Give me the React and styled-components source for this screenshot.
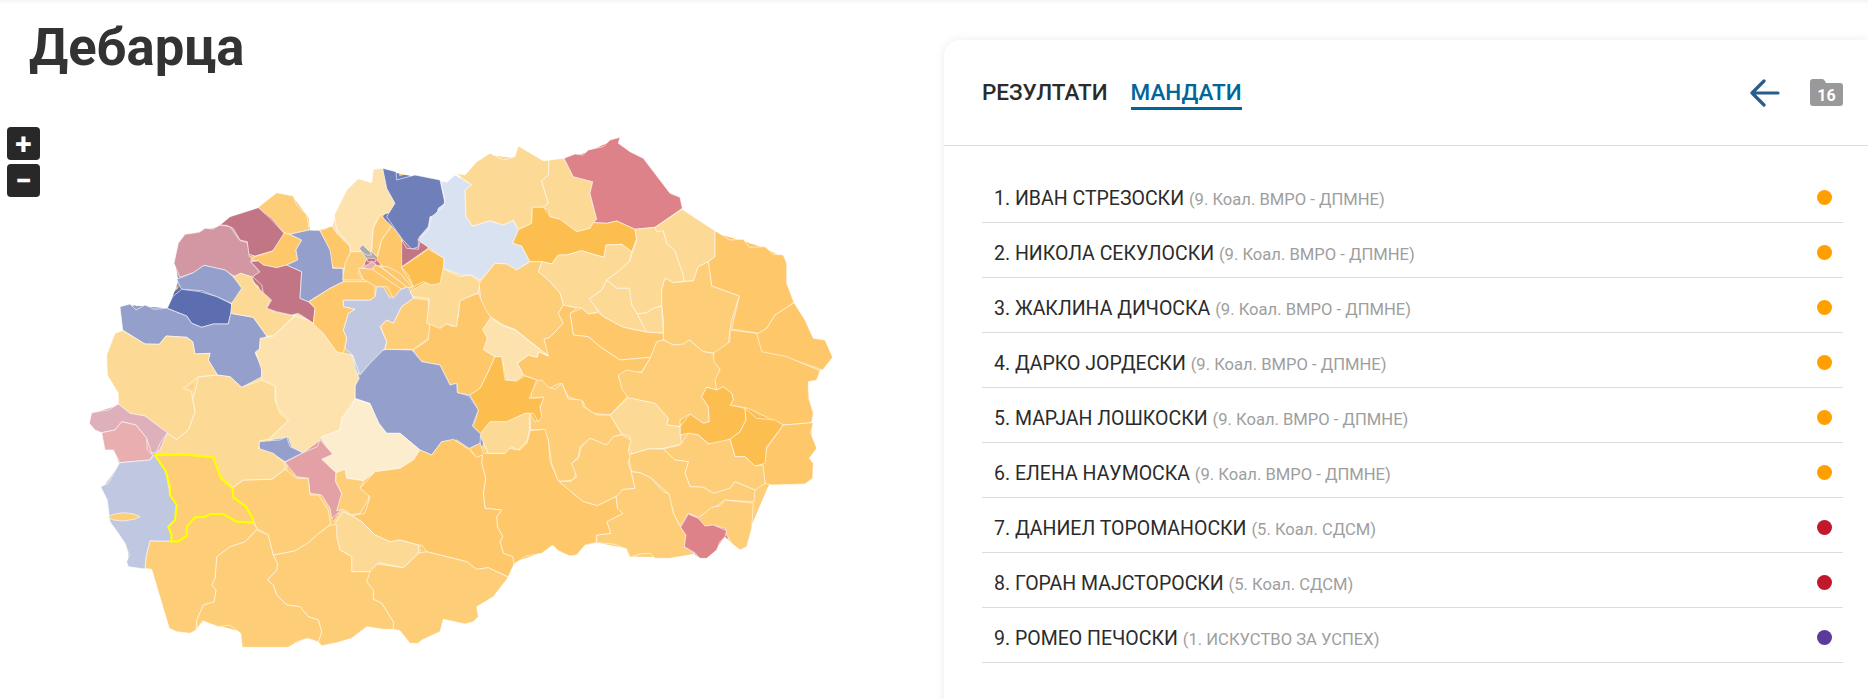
import React from 'react';
import styled, { createGlobalStyle } from 'styled-components';

const GlobalStyle = createGlobalStyle`
    html, body {
        margin: 0;
        padding: 0;
        background: #fff;
        font-family: Roboto, "Liberation Sans", sans-serif;
    }
    body {
        height: 699px;
        overflow: hidden;
    }
`;

const MANDATES = [
    { name: 'ИВАН СТРЕЗОСКИ', party: '9. Коал. ВМРО - ДПМНЕ', color: '#ffa000' },
    { name: 'НИКОЛА СЕКУЛОСКИ', party: '9. Коал. ВМРО - ДПМНЕ', color: '#ffa000' },
    { name: 'ЖАКЛИНА ДИЧОСКА', party: '9. Коал. ВМРО - ДПМНЕ', color: '#ffa000' },
    { name: 'ДАРКО ЈОРДЕСКИ', party: '9. Коал. ВМРО - ДПМНЕ', color: '#ffa000' },
    { name: 'МАРЈАН ЛОШКОСКИ', party: '9. Коал. ВМРО - ДПМНЕ', color: '#ffa000' },
    { name: 'ЕЛЕНА НАУМОСКА', party: '9. Коал. ВМРО - ДПМНЕ', color: '#ffa000' },
    { name: 'ДАНИЕЛ ТОРОМАНОСКИ', party: '5. Коал. СДСМ', color: '#c2182b' },
    { name: 'ГОРАН МАЈСТОРОСКИ', party: '5. Коал. СДСМ', color: '#c2182b' },
    { name: 'РОМЕО ПЕЧОСКИ', party: '1. ИСКУСТВО ЗА УСПЕХ', color: '#5b3a9e' }
];

const ORANGE = '#fdcd78';
const ORANGE2 = '#fdc76a';
const STRONG = '#fdbe50';
const PALE = '#fdd996';
const PALER = '#fde2ae';
const PALEST = '#fdedcf';
const BLUE = '#94a0cb';
const NAVY = '#5c6eaf';
const INDIGO = '#6f7fb9';
const SKY = '#c0c8e1';
const MIST = '#d9e2f1';
const WINE = '#c27585';
const ROSE = '#d297a3';
const RED = '#dd8288';
const PINK = '#e3a1a6';
const BLUSH = '#e9afb0';
const MAUVE = '#ddb0bc';

// traced from 3x crops, so every shape keeps the crop origin it was read from
const A = [0, 100];
const B = [400, 120];
const C = [60, 400];
const D = [450, 400];
const E = [300, 170];
const F = [240, 300];
const G = [500, 300];

const REGIONS = [
    [A, ORANGE, '775,322 830,278 880,288 890,315 920,345 928,390 870,403 852,398 815,355'],
    [A, WINE, '660,375 690,350 775,323 815,360 852,400 845,420 818,453 765,468 745,462 742,425 720,420 700,385 680,376'],
    [A, ROSE, '540,532 522,490 535,430 555,403 598,397 615,385 640,387 660,375 690,380 720,422 742,428 748,470 765,480 752,485 775,512 780,520 755,532 722,520 705,530 675,510 612,496 580,518'],
    [A, BLUE, '530,538 580,518 612,496 675,510 700,530 725,562 720,590 695,610 650,590 605,572 545,568'],
    [A, NAVY, '502,625 518,590 545,568 600,575 650,590 695,612 698,635 690,650 685,672 640,672 605,682 575,670 560,648'],
    [A, BLUE, '360,620 390,612 408,630 435,615 462,628 500,625 560,648 575,670 605,682 640,672 685,672 692,640 760,652 800,708 780,725 778,752 765,758 785,800 785,830 725,862 690,830 652,825 625,780 630,760 585,762 578,725 560,712 498,708 478,733 435,732 368,690'],
    [A, ORANGE2, '765,470 818,453 852,400 870,403 905,420 888,450 893,480 860,495 830,503 790,495 775,483 752,480'],
    [A, PALE, '700,530 722,520 755,530 765,555 790,578 812,600 800,625 825,635 870,645 885,645 820,708 800,708 760,652 692,640 695,610 725,565'],
    [A, WINE, '752,485 775,483 790,495 830,503 860,495 905,515 900,595 925,605 945,625 940,670 895,640 875,645 830,635 800,625 815,600 790,578 785,555 758,530 780,515'],
    [A, BLUE, '860,495 893,480 888,450 905,420 870,403 928,390 960,392 995,455 998,505 1028,505 1030,545 990,565 925,605 900,595 905,515'],
    [A, ORANGE2, '960,392 995,378 1010,400 1050,440 1050,460 1032,505 998,503 990,450'],
    [A, PALER, '1003,345 1040,270 1075,236 1115,248 1120,208 1148,205 1165,270 1185,305 1180,335 1140,345 1120,385 1115,455 1052,455 1050,435 1010,390'],
    [A, ORANGE, '1120,385 1140,345 1175,378 1145,420 1130,470 1115,455'],
    [A, ORANGE, '1028,540 1035,490 1052,455 1085,455 1100,478 1085,505 1075,520 1090,540'],
    [A, ORANGE2, '1130,480 1145,420 1175,378 1205,415 1215,465 1205,505 1240,560 1225,560 1150,500'],
    [A, INDIGO, '1148,205 1188,215 1190,240 1245,225 1320,240 1335,310 1315,325 1310,345 1290,350 1285,380 1255,415 1255,440 1235,448 1205,415 1160,350 1185,310 1160,265'],
    [B, MIST, '125,182 140,187 165,165 215,195 195,210 198,290 218,318 270,302 310,315 340,300 355,330 338,370 365,378 390,425 350,450 320,432 285,430 240,480 215,465 185,465 130,445 132,415 88,385 55,360 85,330 95,290 130,260 135,240 125,200'],
    [B, PALE, '168,160 195,165 230,125 270,100 310,120 345,110 355,78 430,122 447,120 445,170 425,182 445,250 430,262 397,262 395,310 355,327 340,300 310,315 270,302 218,318 198,290 195,210 215,195'],
    [B, PALE, '447,120 492,115 520,170 578,185 570,220 590,298 570,325 530,335 480,298 450,290 445,270 430,262 445,250 425,182 445,165'],
    [B, RED, '492,115 525,102 550,105 565,90 610,80 630,60 660,52 655,70 690,95 730,115 810,220 840,232 847,265 765,322 705,328 650,303 620,310 580,308 590,298 570,220 578,185 520,170'],
    [B, STRONG, '397,262 430,262 450,290 480,298 530,335 570,325 580,308 620,310 650,303 705,328 710,355 695,395 665,373 618,375 612,412 580,403 545,392 500,405 475,405 455,432 425,425 390,425 365,378 338,370 355,330 395,310'],
    [B, PALE, '415,455 425,425 455,432 475,405 500,405 545,392 580,403 612,412 618,375 665,373 695,395 688,425 660,450 620,480 605,510 570,535 595,575 565,582 545,565 490,555 480,520 445,480'],
    [B, PALE, '705,328 765,322 790,332 800,370 825,392 850,465 852,483 820,488 795,475 785,510 785,558 760,565 740,578 712,582 695,555 685,505 650,505 620,480 660,450 688,425 710,360'],
    [B, PALE, '765,322 847,268 880,290 945,332 945,410 925,425 895,440 880,483 852,483 850,465 825,392 800,370 790,332 770,335'],
    [B, ORANGE2, '945,332 990,360 1030,358 1048,382 1095,380 1120,403 1150,405 1160,430 1160,490 1182,548 1125,585 1100,625 1075,640 995,627 1018,528 935,498 925,425 945,410'],
    [B, ORANGE2, '1182,548 1215,600 1240,655 1275,660 1298,712 1268,750 1225,735 1165,715 1085,700 1060,640 1075,640 1100,625 1125,585'],
    [B, ORANGE, '785,510 795,475 820,488 880,483 895,440 925,425 935,498 1018,528 995,600 990,627 985,672 945,700 910,695 868,660 850,675 815,675 790,658 790,600 785,558'],
    [B, PALE, '570,535 605,510 620,480 650,505 688,505 695,555 712,582 740,635 670,622 610,590 570,540'],
    [B, PALE, '712,582 740,578 760,565 785,558 790,637 740,637'],
    [B, ORANGE2, '510,580 545,565 565,582 595,578 610,590 670,622 740,637 790,640 790,658 770,670 752,712 660,720 600,680 565,650 520,645'],
    [B, ORANGE, '237,490 285,430 320,432 350,450 390,425 425,425 415,455 445,480 480,520 490,555 475,580 490,610 450,652 432,658 443,685 445,708 345,628 310,615 270,590 245,560'],
    [B, ORANGE2, '490,555 510,560 530,565 510,580 520,645 565,650 600,680 660,720 752,712 725,755 680,760 655,770 682,830 630,885 580,880 555,860 550,845 505,830 485,790 470,793 450,805 412,780 370,765 352,730 385,705 412,712 415,695 445,708 432,658 450,652 490,610 475,580'],
    [B, PALER, '248,628 270,592 310,618 345,630 445,708 415,695 412,712 385,705 352,730 370,765 345,783 320,780 305,710 285,710 280,710 250,685 262,655'],
    [G, ORANGE2, '640,160 690,125 690,90 770,100 785,155 860,170 960,212 950,240 925,245 925,290 940,340 935,368 850,375 745,325 690,315 700,300 695,280 670,260 650,270 640,240 660,208 640,185'],
    [G, ORANGE2, '850,375 940,368 932,400 950,445 928,475 940,490 938,535 915,552 815,555 795,550 785,495 800,445'],
    [G, ORANGE, '490,120 520,135 550,132 568,120 610,155 640,160 642,185 660,208 645,240 650,270 620,262 605,290 625,320 628,365 610,370 570,342 540,360 540,380 500,375 505,355 465,310 385,295 365,265 355,225 380,210 425,218 450,175 470,125'],
    [G, STRONG, '605,290 620,262 650,270 670,260 695,280 700,300 690,315 735,325 738,360 720,395 690,418 640,435 625,430 595,405 565,400 540,405 540,380 570,342 610,370 628,365 625,320'],
    [G, STRONG, '735,325 770,355 825,360 850,375 800,440 795,490 765,498 735,470 705,470 690,418 720,395 738,360'],
    [G, PALE, '330,345 385,293 465,310 505,355 500,375 540,380 540,405 545,432 490,445 445,447 395,462 385,440 390,410 365,402'],
    [G, ORANGE, '490,447 540,435 565,400 595,405 625,432 690,418 705,470 735,470 765,498 790,495 795,550 765,570 705,545 690,565 665,575 640,580 610,562 570,560 555,520 565,485 525,480'],
    [G, ORANGE, '385,465 445,447 490,447 525,480 565,485 555,520 570,560 610,562 640,580 690,565 705,545 765,570 762,605 675,600 640,625 595,652 565,640 540,680 520,640 505,580 455,535 420,518 395,515'],
    [G, ORANGE, '118,240 90,270 95,295 130,290 120,325 120,355 105,365 90,340 92,390 130,388 145,420 155,490 175,545 220,540 230,515 215,490 235,470 240,440 270,415 320,437 340,410 365,402 330,345 290,345 250,320 245,300 205,297 185,250 165,268 145,262 125,240'],
    [D, ORANGE, '745,355 785,322 810,318 825,300 910,310 905,385 890,440 870,450 845,430 830,405 825,385 785,375 765,378 720,342'],
    [D, ORANGE, '440,405 482,400 470,365 518,340 502,325 498,290 518,268 555,265 543,215 570,218 600,232 640,275 658,282 670,340 692,382 708,405 703,440 735,462 660,475 615,475 600,460 570,462 540,472 530,447 490,432 440,428'],
    [D, RED, '692,382 715,342 745,355 765,378 790,375 830,392 825,410 810,425 800,450 770,475 750,475 735,458 703,440 708,405'],
    [D, ORANGE, '325,243 360,245 380,230 365,190 385,175 395,140 420,115 470,135 490,110 515,105 543,120 535,150 540,170 535,190 543,215 555,265 518,268 498,290 442,317 400,305 375,285'],
    [D, ORANGE2, '240,92 285,88 295,120 300,185 325,243 375,285 400,305 442,317 498,290 502,325 518,340 470,365 482,400 440,405 438,428 405,435 380,465 360,468 325,452 308,435 275,460 228,468 192,492 188,470 160,460 150,425 158,410 142,380 140,350 155,330 105,325 100,280 107,235 95,190 97,165 80,175 60,145 90,128 100,160 165,160 175,145 210,150 232,128'],
    [F, ORANGE2, '520,150 565,120 565,70 590,70 600,85 615,70 640,80 655,50 658,0 715,-20 735,25 752,52 728,88 742,115 730,150 765,170 745,215 720,265 690,285 652,278 650,250 630,255 600,195 545,185'],
    [F, PALE, '720,405 750,365 800,365 830,350 868,335 868,390 862,420 835,450 815,440 795,460 745,460'],
    [F, STRONG, '690,285 720,265 745,215 765,170 785,170 795,240 830,243 855,228 890,240 868,295 912,293 900,320 905,350 895,365 880,340 855,340 800,365 750,365 722,400 700,380 715,330'],
    [F, BLUE, '345,258 362,200 410,155 440,148 515,150 545,185 600,195 630,255 650,250 652,278 688,288 715,330 697,378 722,402 720,430 688,445 650,420 605,425 575,465 540,450 480,400 440,400 415,370 390,310 345,295'],
    [F, PALEST, '345,298 390,312 417,370 440,400 480,400 540,450 518,487 480,505 405,517 370,542 320,535 315,508 288,518 245,478 278,465 245,420 245,410 300,390 305,355 335,320'],
    [F, PALER, '60,115 100,108 165,48 205,60 240,85 275,135 300,158 340,165 345,205 358,235 345,258 345,295 330,320 305,355 300,390 245,410 240,420 190,458 155,440 145,412 85,420 140,365 145,355 110,325 105,260 65,245 65,210 47,155 60,145'],
    [F, PINK, '135,487 190,458 232,440 240,420 278,462 245,478 288,518 287,545 305,580 305,630 275,655 270,625 245,585 210,580 205,535 170,530'],
    [F, BLUE, '55,425 120,420 140,410 150,440 188,458 135,485 100,462 62,462'],
    [F, ORANGE, '288,518 315,508 320,535 372,542 360,565 388,575 385,600 360,640 335,645 310,628 290,632 305,580 287,545'],
    [C, ORANGE2, '875,347 915,340 930,290 900,265 945,215 1020,205 1060,180 1080,150 1115,165 1145,125 1180,118 1225,148 1250,172 1267,165 1265,190 1277,235 1270,280 1275,325 1325,330 1310,350 1312,380 1328,410 1320,425 1330,460 1358,470 1362,492 1345,530 1285,503 1250,508 1220,485 1140,465 1100,455 1085,435 1075,435 1020,420 990,425 945,405 905,365'],
    [C, ORANGE, '920,545 935,490 1030,503 1075,460 1100,455 1140,465 1220,485 1250,508 1285,503 1345,532 1300,590 1250,620 1255,650 1240,665 1215,672 1150,658 1140,695 1085,720 1075,730 1050,730 1020,692 1000,688 1000,665 965,610 940,598 940,570'],
    [C, PALE, '825,370 850,335 875,347 905,365 945,405 990,425 1020,420 1075,435 1075,460 1030,503 955,488 930,515 875,515 875,470 840,450 830,410'],
    [C, ORANGE, '640,465 705,452 745,428 770,405 810,375 830,375 830,410 840,450 875,470 875,515 930,515 920,545 940,570 940,598 965,610 1000,665 1000,688 970,688 920,680 875,715 830,728 785,737 775,725 785,695 775,660 745,650 720,620 680,615 650,585 640,555 622,540 650,510 652,490'],
    [C, ORANGE, '590,390 625,405 640,465 652,490 650,510 622,540 640,555 650,585 680,615 720,620 745,650 775,660 785,695 775,725 742,715 710,725 685,742 547,742 542,700 510,675 475,680 428,662 412,685 410,660 430,615 462,605 468,570 455,555 465,535 470,470 510,440 555,425'],
    [C, ORANGE, '255,505 258,470 270,422 330,424 355,424 380,408 380,380 405,352 435,350 450,342 490,342 530,365 578,368 592,385 555,425 510,440 470,470 465,535 455,555 468,570 462,605 430,615 410,660 408,690 390,700 350,695 328,685 275,508'],
    [C, ORANGE, '520,262 550,240 635,238 675,208 710,235 745,235 750,285 775,285 805,330 812,372 770,405 745,428 705,452 640,465 625,405 590,385 578,355 558,320 520,292'],
    [C, PALE, '405,-25 415,-70 470,-75 510,-70 545,-38 605,-60 645,-42 645,0 660,40 685,62 625,118 600,122 595,145 640,160 675,190 675,208 635,238 550,240 520,262 483,235 460,172 370,163 285,165 300,148 322,100 350,118 385,90 405,35 398,0'],
    [C, PALE, '188,-208 255,-168 298,-167 318,-192 380,-188 398,-175 405,-138 450,-140 445,-120 472,-75 415,-70 370,-35 395,-25 398,0 405,35 385,90 350,118 322,100 255,48 210,40 175,12 175,-20 142,-75 140,-135 165,-200'],
    [C, MAUVE, '95,38 145,30 175,12 210,40 255,48 322,98 300,130 290,155 275,160 260,115 228,75 185,65 165,90 125,98 105,90 88,70'],
    [C, BLUSH, '125,98 165,90 185,65 228,75 260,115 262,150 278,165 270,180 180,188 160,150 135,150'],
    [C, SKY, '175,195 180,188 270,180 283,165 318,215 330,285 350,315 345,360 325,380 335,405 333,424 270,422 258,470 255,507 205,500 200,485 208,465 195,430 175,400 150,365 142,300 122,260 145,250'],
    [C, ORANGE, '142,351 160,343 190,338 222,342 240,350 222,358 190,363 160,360'],
    [A, SKY, '1030,600 1060,600 1110,600 1125,590 1130,560 1150,560 1170,595 1195,570 1225,560 1240,595 1205,620 1180,670 1160,660 1140,680 1160,725 1155,745 1110,790 1080,825 1058,765 1035,745 1040,715 1030,690 1045,640 1065,628 1030,620'],
    [A, ORANGE2, '928,605 990,565 1030,545 1125,545 1125,590 1110,600 1030,600 1030,620 1065,628 1045,640 1030,690 1040,715 1030,760 1010,755 970,700 940,672 945,625'],
    [A, ORANGE, '1142,680 1160,660 1180,670 1205,620 1240,595 1285,600 1290,670 1285,715 1240,748 1155,748 1160,725'],
    [E, PALE, '330,365 380,335 425,295 480,320 510,315 540,335 535,368 480,392 470,470 440,462 420,475 380,460 388,385 340,380'],
    [E, WINE, '305,210 320,235 355,238 360,215 385,232 380,238 305,290'],
    [E, STRONG, '305,292 385,238 432,265 430,295 420,340 395,345 370,335 340,350 325,315'],
    [E, ORANGE2, '175,295 215,295 305,355 280,385 262,350 228,350 190,328'],
    [E, ORANGE2, '215,282 240,290 320,350 305,358 220,300'],
    [E, ORANGE2, '240,288 262,290 300,310 338,355 320,350'],
    [E, BLUSH, '188,295 215,275 228,283 215,298'],
    [E, WINE, '200,265 225,265 228,275 203,275'],
    [E, '#aaaaaa', '178,235 188,225 210,245 215,255 200,255 185,245']
];

// Дебарца, drawn on top of everything else
const SELECTED = [C, ORANGE, '285,165 370,163 460,172 483,235 518,265 520,292 558,320 578,355 578,368 530,365 490,342 450,342 435,350 405,352 380,380 380,408 355,424 333,424 335,405 325,380 345,360 350,315 330,285 330,260 318,215'];

// outer edge of the country, used to close slivers between the traced regions
const COAST =
    '123,330 120,307 133,305 167,308 177,280 174,263 185,235 220,225 258,207 277,194 293,197 308,217 309,231 332,227 335,215 347,191 358,179 372,183 373,170 383,169 415,176 440,181 447,182 465,175 477,162 490,154 515,157 518,147 543,161 564,159 588,151 610,141 618,144 643,159 670,194 680,198 681,208 693,217 715,232 743,240 765,247 783,256 786,283 793,303 812,339 825,341 831,357 822,370 809,382 812,413 812,423 815,448 808,458 812,478 805,483 771,484 752,528 747,546 740,549 732,543 726,537 717,550 707,557 700,558 695,554 670,558 630,557 627,549 597,543 585,546 577,554 558,550 553,546 542,553 514,563 508,578 493,597 477,607 477,617 465,623 443,620 440,631 418,643 400,630 367,627 352,638 322,645 307,639 288,647 243,647 241,633 218,627 203,621 192,633 170,628 152,570 128,566 125,543 110,522 107,500 102,487 118,465 113,450 103,433 90,423 92,413 118,405 118,393 107,375 107,355 115,333';

const toPoints = ([x0, y0], pts) =>
    pts
        .split(' ')
        .map((p) => {
            const [x, y] = p.split(',').map(Number);
            return `${(x0 + x / 3).toFixed(1)},${(y0 + y / 3).toFixed(1)}`;
        })
        .join(' ');

function Row({ index, item }) {
    return (
        <MandateRow>
            <MandateText>
                {index}. {item.name} <Party>({item.party})</Party>
            </MandateText>
            <Dot $color={item.color} />
        </MandateRow>
    );
}

function App() {
    return (
        <Page>
            <GlobalStyle />
            <MapColumn>
                <Title>Дебарца</Title>
                <MapWrap>
                    <ZoomControls>
                        <ZoomButton>+</ZoomButton>
                        <ZoomButton>−</ZoomButton>
                    </ZoomControls>
                    <MapSvg viewBox='0 110 944 589'>
                        <defs>
                            <clipPath id='country'>
                                <polygon points={COAST} transform='translate(460 400) scale(0.995) translate(-460 -400)' />
                            </clipPath>
                        </defs>
                        <g clipPath='url(#country)'>
                            <polygon points={COAST} fill={ORANGE} />
                            {REGIONS.map(([crop, fill, pts], i) => (
                                <polygon key={i} points={toPoints(crop, pts)} fill={fill} stroke={fill} strokeWidth='6' />
                            ))}
                        </g>
                        {REGIONS.map(([crop, fill, pts], i) => (
                            <polygon
                                key={i}
                                points={toPoints(crop, pts)}
                                fill={fill}
                                stroke='#fff'
                                strokeOpacity='0.75'
                                strokeWidth='0.8'
                                strokeLinejoin='round'
                            />
                        ))}
                        <polygon
                            points={toPoints(SELECTED[0], SELECTED[2])}
                            fill={SELECTED[1]}
                            stroke='#ffff00'
                            strokeWidth='2.2'
                            strokeLinejoin='round'
                        />
                    </MapSvg>
                </MapWrap>
            </MapColumn>
            <Panel>
                <PanelHeader>
                    <Tabs>
                        <Tab>РЕЗУЛТАТИ</Tab>
                        <Tab $active>МАНДАТИ</Tab>
                    </Tabs>
                    <HeaderIcons>
                        <svg width='30' height='28' viewBox='0 0 30 28' fill='none'>
                            <path d='M2 14H28M14 2L2 14L14 26' stroke='#2a5d8c' strokeWidth='3.2' strokeLinecap='round' strokeLinejoin='round' />
                        </svg>
                        <svg width='33' height='27' viewBox='0 0 33 27'>
                            <path
                                d='M0 3Q0 0 3 0H12Q14 0 15 2L16 4H30Q33 4 33 7V24Q33 27 30 27H3Q0 27 0 24Z'
                                fill='#999999'
                            />
                            <FolderCount x='16.5' y='22' textAnchor='middle'>
                                16
                            </FolderCount>
                        </svg>
                    </HeaderIcons>
                </PanelHeader>
                <MandateList>
                    {MANDATES.map((item, i) => (
                        <Row key={item.name} index={i + 1} item={item} />
                    ))}
                </MandateList>
            </Panel>
        </Page>
    );
}

const Page = styled.div`
    display: flex;
    align-items: flex-start;
    height: 699px;
    overflow: hidden;
    box-shadow: inset 0 4px 4px -3px rgba(0, 0, 0, 0.07);
`;

const MapColumn = styled.div`
    width: 944px;
    flex-shrink: 0;
`;

const Title = styled.h1`
    margin: 0;
    height: 110px;
    padding: 16px 0 0 29px;
    box-sizing: border-box;
    font-size: 52.6px;
    line-height: 62px;
    font-weight: 700;
    color: #333333;
`;

const MapWrap = styled.div`
    position: relative;
`;

const MapSvg = styled.svg`
    display: block;
    width: 944px;
    height: 589px;
`;

const ZoomControls = styled.div`
    position: absolute;
    top: 17px;
    left: 7px;
    display: flex;
    flex-direction: column;
    gap: 4px;
`;

const ZoomButton = styled.div`
    width: 33px;
    height: 33px;
    border-radius: 4px;
    background: #282828;
    color: #fff;
    font-size: 30px;
    font-weight: 700;
    line-height: 33px;
    text-align: center;
`;

const Panel = styled.section`
    flex: 1;
    margin-top: 40px;
    height: 700px;
    background: #fff;
    border-top-left-radius: 16px;
    box-shadow: 0 0 10px rgba(0, 0, 0, 0.08);
`;

const PanelHeader = styled.header`
    display: flex;
    align-items: center;
    justify-content: space-between;
    height: 105px;
    padding: 0 25px 0 38px;
`;

const Tabs = styled.nav`
    display: flex;
    gap: 23px;
    padding-top: 3px;
`;

const Tab = styled.span`
    padding-bottom: 1px;
    font-size: 22.5px;
    line-height: 28px;
    font-weight: 500;
    color: ${(p) => (p.$active ? '#006699' : '#2b2b2b')};
    border-bottom: 3px solid ${(p) => (p.$active ? '#006699' : 'transparent')};
`;

const HeaderIcons = styled.div`
    display: flex;
    align-items: center;
    gap: 30px;
`;

const FolderCount = styled.text`
    font-family: Roboto, sans-serif;
    font-size: 16px;
    font-weight: 700;
    fill: #fff;
`;

const MandateList = styled.ul`
    list-style: none;
    margin: 0;
    padding: 22px 25px 0 38px;
    border-top: 1px solid #dcdcdc;
`;

const MandateRow = styled.li`
    display: flex;
    align-items: center;
    justify-content: space-between;
    box-sizing: border-box;
    height: 55px;
    padding: 4px 11px 0 12px;
    border-bottom: 1px solid #dcdcdc;
`;

const MandateText = styled.span`
    padding-top: 2px;
    font-size: 19.5px;
    color: #2b2b2b;
`;

const Party = styled.span`
    font-size: 16.6px;
    color: #9e9e9e;
`;

const Dot = styled.i`
    width: 15px;
    height: 15px;
    border-radius: 50%;
    background: ${(p) => p.$color};
`;

export default App;
